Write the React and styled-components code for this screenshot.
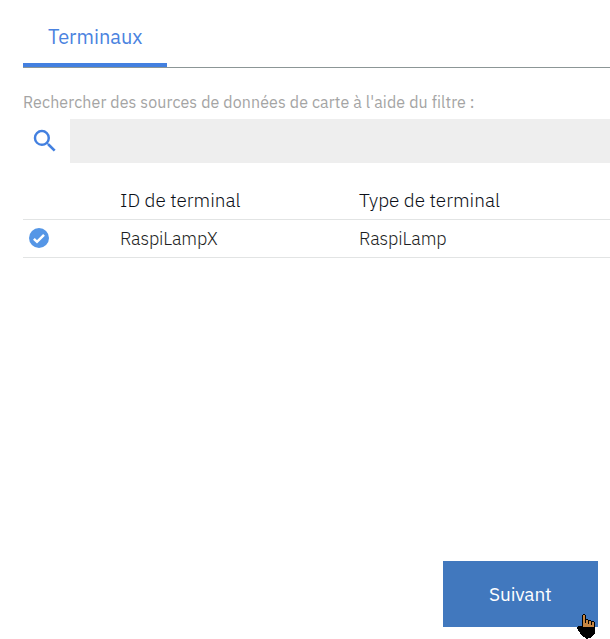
import React from "react";
import styled, { createGlobalStyle } from "styled-components";

const GlobalStyle = createGlobalStyle`
  * { box-sizing: border-box; }
  body {
    margin: 0;
    background: #fff;
    overflow: hidden;
    font-family: "IBM Plex Sans", Roboto, "Liberation Sans", sans-serif;
  }
`;

const Page = styled.main`
  position: relative;
  display: flex;
  flex-direction: column;
  width: 610px;
  height: 639px;
  padding-left: 23px;
  overflow: hidden;
`;

const TabBar = styled.nav`
  display: flex;
  height: 68px;
  border-bottom: 1px solid #8c9696;
`;

const Tab = styled.div`
  width: 144px;
  height: 67px;
  padding: 22px 0 0 25px;
  border-bottom: 4px solid #4380e0;
  color: #4b83e0;
`;

const Text = styled.span`
  display: block;
  white-space: nowrap;
  font-size: ${(p) => p.$size}px;
  font-weight: ${(p) => p.$weight || 300};
  letter-spacing: ${(p) => p.$spacing || 0}px;
  line-height: 30px;
`;

const FilterLabel = styled.label`
  height: 51px;
  padding-top: 19px;
  color: #a4a4a4;
`;

const SearchRow = styled.div`
  display: flex;
  height: 44px;
`;

const SearchIconBox = styled.div`
  width: 47px;
  padding: 7px 0 0 7px;
  svg { display: block; }
`;

const SearchField = styled.input`
  flex: 1;
  min-width: 0;
  border: 0;
  border-radius: 0;
  padding: 0 12px;
  background: #eee;
  outline: none;
`;

const Table = styled.div`
  margin-top: 18px;
`;

const Row = styled.div`
  display: grid;
  grid-template-columns: 97px 239px 1fr;
  align-items: center;
  height: 38px;
  border-bottom: 1px solid #e2e4e4;
  color: #1c1e22;
  svg { display: block; margin: -1px 0 0 6px; }
`;

const HeaderRow = styled(Row)`
  height: 39px;
  padding-bottom: 1px;
  color: #0c1018;
`;

const Footer = styled.footer`
  display: flex;
  justify-content: flex-end;
  margin-top: auto;
  padding: 0 12px 12px 0;
`;

const NextButton = styled.button`
  display: flex;
  align-items: center;
  width: 155px;
  height: 66px;
  padding: 0 0 0 46px;
  border: 0;
  background: #4178be;
  color: #fff;
  font-family: inherit;
  cursor: pointer;
`;

const Pointer = styled.svg`
  position: absolute;
  left: 577px;
  top: 614px;
  pointer-events: none;
`;

const SearchIcon = () => (
  <svg width="30" height="30" viewBox="0 0 24 24" fill="#4380e0">
    <path d="M15.5 14h-.79l-.28-.27A6.47 6.47 0 0 0 16 9.5 6.5 6.5 0 1 0 9.5 16c1.61 0 3.09-.59 4.23-1.57l.27.28v.79l5 4.99L20.49 19l-4.99-5zm-6 0C7.01 14 5 11.99 5 9.5S7.01 5 9.5 5 14 7.01 14 9.5 11.99 14 9.5 14z" />
  </svg>
);

const CheckIcon = () => (
  <svg width="20" height="20" viewBox="0 0 20 20">
    <circle cx="10" cy="10" r="10" fill="#5596e6" />
    <path d="M4.9 10.8l3.1 3 7-7" fill="none" stroke="#fff" strokeWidth="2.5" />
  </svg>
);

const HandPointer = () => (
  <Pointer width="18" height="25" viewBox="0 0 18 25" shapeRendering="crispEdges">
    <path
      fill="#000"
      d="M6 0h2v1h1v4h2v1h3v1h3v1h1v12h-1v1h-1v1h-1v1h-1v1h-3v1H9v-1H8v-1H6v-1H5v-1H4v-1H3v-2H2v-1H1v-2H0v-2h1v-1h4V1h1z"
    />
    <path fill="#c68642" d="M6 1h2v8h1V6h2v4h1V7h2v4h1V8h2v5H6z" />
  </Pointer>
);

export default function App() {
  return (
    <>
      <GlobalStyle />
      <Page>
        <TabBar>
          <Tab><Text $size={20} $weight={400}>Terminaux</Text></Tab>
        </TabBar>
        <FilterLabel htmlFor="filter">
          <Text $size={16} $weight={400} $spacing={0.11}>
            Rechercher des sources de données de carte à l'aide du filtre :
          </Text>
        </FilterLabel>
        <SearchRow>
          <SearchIconBox><SearchIcon /></SearchIconBox>
          <SearchField id="filter" />
        </SearchRow>
        <Table>
          <HeaderRow>
            <span />
            <Text $size={19}>ID de terminal</Text>
            <Text $size={19}>Type de terminal</Text>
          </HeaderRow>
          <Row>
            <CheckIcon />
            <Text $size={18} $spacing={-0.15}>RaspiLampX</Text>
            <Text $size={18} $spacing={-0.1}>RaspiLamp</Text>
          </Row>
        </Table>
        <Footer>
          <NextButton><Text $size={19} $weight={400} $spacing={-0.1}>Suivant</Text></NextButton>
        </Footer>
        <HandPointer />
      </Page>
    </>
  );
}
